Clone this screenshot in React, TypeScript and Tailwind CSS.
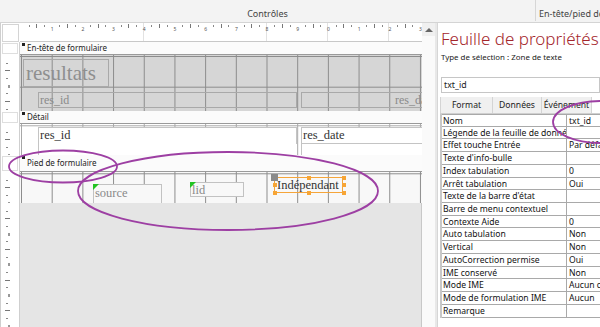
import React from 'react';

const STEP = 7.675;

const props: [string, string][] = [
  ['Nom', 'txt_id'],
  ['Légende de la feuille de donnée', ''],
  ['Effet touche Entrée', 'Par défaut'],
  ["Texte d'info-bulle", ''],
  ['Index tabulation', '0'],
  ['Arrêt tabulation', 'Oui'],
  ["Texte de la barre d'état", ''],
  ['Barre de menu contextuel', ''],
  ['Contexte Aide', '0'],
  ['Auto tabulation', 'Non'],
  ['Vertical', 'Non'],
  ['AutoCorrection permise', 'Oui'],
  ['IME conservé', 'Non'],
  ['Mode IME', 'Aucun contrôle'],
  ['Mode de formulation IME', 'Aucun'],
  ['Remarque', ''],
];

function HRuler() {
  const marks = [];
  for (let i = 1; 1 + i * STEP < 402; i++) {
    const x = 1 + i * STEP;
    if (i % 4 === 0) {
      marks.push(
        <span key={i} className="absolute top-[4px] text-[5px] leading-none text-[#555]" style={{ left: x - 1 }}>
          {(i / 4) % 10}
        </span>
      );
    } else {
      marks.push(
        <span
          key={i}
          className={i % 4 === 2 ? 'absolute top-[1px] w-px h-[4px] bg-[#777]' : 'absolute top-[2px] w-px h-[2px] bg-[#888]'}
          style={{ left: x }}
        />
      );
    }
  }
  return (
    <div className="relative w-[402px] h-full bg-white border-b border-[#c8c8c8] overflow-hidden">
      {[143, 266, 327, 388].map((x) => (
        <span key={x} className="absolute top-0 bottom-0 w-px bg-[#e2e2e2]" style={{ left: x - 20 }} />
      ))}
      {marks}
    </div>
  );
}

function VRuler({ h }: { h: number }) {
  const marks = [];
  for (let i = 1; i * STEP < h; i++) {
    const y = i * STEP;
    if (i % 4 === 0) {
      marks.push(<span key={i} className="absolute left-[7px] w-[2px] h-[3px] bg-[#999]" style={{ top: y - 1 }} />);
    } else if (i % 4 === 2) {
      marks.push(<span key={i} className="absolute left-[4px] w-[5px] h-px bg-[#777]" style={{ top: y }} />);
    } else {
      marks.push(<span key={i} className="absolute left-[5px] w-[2px] h-px bg-[#888]" style={{ top: y }} />);
    }
  }
  return (
    <div className="relative w-[20px] h-full border-l border-r border-[#cfcfcf] bg-white overflow-hidden">{marks}</div>
  );
}

function Bar({ label, h }: { label: string; h: string }) {
  return (
    <div className={`flex ${h}`}>
      <div className="w-[20px] h-full border-l border-r border-[#cfcfcf] bg-white p-px">
        <div className="h-full border border-[#dedede]" />
      </div>
      <div className="relative w-[402px] h-full bg-[#fbfbfb] border-b border-[#9a9a9a] flex items-center">
        <span className="absolute left-[2px] top-[1px] w-[3px] h-[3px] bg-[#222]" />
        <span className="pl-[7px] text-[8px] leading-none text-[#222]">{label}</span>
      </div>
    </div>
  );
}

const darkGrid =
  '[background-image:linear-gradient(to_right,#8c8c8c_1px,transparent_1px),linear-gradient(to_bottom,#8c8c8c_1px,transparent_1px)] [background-size:30.7px_30.7px] [background-position:1px_1px]';
const lightGrid =
  '[background-image:linear-gradient(to_right,#a8a8a8_1px,transparent_1px),linear-gradient(to_bottom,#a8a8a8_1px,transparent_1px)] [background-size:30.7px_30.7px] [background-position:1px_1px]';

const serif = "font-['Liberation_Serif',serif]";

function DesignView() {
  return (
    <div className="w-[422px] flex flex-col">
      <div className="flex h-[19px]">
        <div className="w-[20px] h-full border-l border-[#cfcfcf] bg-white p-[1px] pb-0">
          <div className="h-full border border-[#d4d4d4]" />
        </div>
        <HRuler />
      </div>

      <Bar label="En-tête de formulaire" h="h-[13px]" />
      <div className="flex h-[56px]">
        <VRuler h={56} />
        <div className={`relative w-[402px] h-full overflow-hidden bg-[#d6d6d6] ${darkGrid}`}>
          <div className={`absolute left-[3px] top-[4px] w-[86px] h-[28px] border border-[#a9a9a9] ${serif} text-[21px] leading-none text-[#8f8f8f] pl-[2px] pt-[3px]`}>
            resultats
          </div>
          <div className={`absolute left-[18px] top-[37px] w-[259px] h-[16px] border border-[#a9a9a9] ${serif} text-[12px] leading-[14px] text-[#8a8a8a] pl-[1px]`}>
            res_id
          </div>
          <div className={`absolute left-[281px] top-[37px] w-[125px] h-[16px] border border-[#a9a9a9] ${serif} text-[12px] leading-[14px] text-[#8a8a8a] pl-[93px] whitespace-nowrap`}>
            res_date
          </div>
        </div>
      </div>

      <Bar label="Détail" h="h-[13px]" />
      <div className="flex h-[31px]">
        <VRuler h={31} />
        <div className={`relative w-[402px] h-full overflow-hidden bg-white ${lightGrid}`}>
          <div className={`absolute left-[18px] top-[3px] w-[259px] h-[18px] border border-[#c4c4c4] bg-white ${serif} text-[12.5px] leading-[15px] text-[#333] pl-[1px]`}>
            res_id
          </div>
          <div className="absolute left-[18px] top-[20px] w-[259px] h-[14px] border-l border-[#c4c4c4] bg-white" />
          <div className={`absolute left-[281px] top-[3px] w-[125px] h-[17px] border border-[#c4c4c4] bg-white ${serif} text-[12.5px] leading-[15px] text-[#333] pl-[1px]`}>
            res_date
          </div>
          <div className="absolute left-[281px] top-[19px] w-[125px] h-[14px] border border-[#c4c4c4] bg-white" />
        </div>
      </div>

      <Bar label="Pied de formulaire" h="h-[17px]" />
      <div className="flex h-[31px]">
        <VRuler h={31} />
        <div className={`relative w-[402px] h-full overflow-hidden bg-[#f8f8f8] ${darkGrid}`}>
          <div className={`absolute left-[73px] top-[12px] w-[69px] h-[21px] border border-[#c2c2c2] bg-[#f8f8f8] ${serif} text-[12.5px] leading-[15px] text-[#8a8a8a] pl-[1px] pt-[1px]`}>
            source
          </div>
          <span className="absolute left-[73px] top-[12px] w-0 h-0 border-t-[6px] border-r-[6px] border-t-[#22c322] border-r-transparent" />
          <div className={`absolute left-[170px] top-[10px] w-[54px] h-[15px] border border-[#c2c2c2] bg-[#f8f8f8] ${serif} text-[12.5px] leading-[14px] text-[#8a8a8a] pl-[1px]`}>
            lid
          </div>
          <span className="absolute left-[170px] top-[10px] w-0 h-0 border-t-[6px] border-r-[6px] border-t-[#22c322] border-r-transparent" />
          <div className={`absolute left-[254px] top-[5px] w-[69px] h-[16px] border border-[#f5a53a] ${serif} text-[12.5px] leading-[14px] text-[#333] pl-[2px] whitespace-nowrap`}>
            Indépendant
          </div>
          {[
            [254, 5], [288, 5], [323, 5],
            [254, 12], [323, 12],
            [254, 20], [288, 20], [323, 20],
          ].map(([x, y]) => (
            <span key={`${x}-${y}`} className="absolute w-[4px] h-[4px] bg-[#f7a535]" style={{ left: x - 1, top: y - 1 }} />
          ))}
          <span className="absolute left-[251px] top-[2px] w-[7px] h-[7px] bg-[#8a8a8a]" />
        </div>
      </div>

      <div className="flex flex-1 min-h-0">
        <VRuler h={124} />
        <div className="w-[402px] h-full bg-[#e5e5e5] border-r border-[#c8c8c8]" />
      </div>
    </div>
  );
}

function Scrollbar() {
  return (
    <div className="w-[13px] flex flex-col bg-white">
      <div className="h-[13px] flex items-center justify-center bg-[#f0f0f0]">
        <span className="w-0 h-0 border-l-[4px] border-r-[4px] border-b-[4px] border-l-transparent border-r-transparent border-b-[#666]" />
      </div>
      <div className="flex-1 bg-[#fafafa]" />
    </div>
  );
}

function PropertySheet() {
  return (
    <div className="w-[163px] h-full border-l border-[#d6d6d6] bg-white overflow-hidden">
      <div className="h-[28px] pl-[3px] pt-[7px] text-[17px] leading-none font-light text-[#a4262c] whitespace-nowrap">
        Feuille de propriétés
      </div>
      <div className="h-[12px] pl-[3px] text-[7.9px] leading-[12px] text-[#222] whitespace-nowrap">
        Type de sélection : Zone de texte
      </div>
      <div className="mt-[14px] ml-[3px] h-[16px] border border-[#c6c6c6] pl-[2px] text-[8.8px] leading-[14px] text-[#222]">
        txt_id
      </div>
      <div className="mt-[4px] ml-[2px] h-[17px] flex border-b border-[#cfcfcf] text-[8.6px] text-[#222] whitespace-nowrap">
        <div className="w-[53px] flex items-center justify-center bg-[#f0f0f0] border-l border-r border-[#d4d4d4]">Format</div>
        <div className="w-[49px] flex items-center justify-center bg-[#f0f0f0] border-r border-[#d4d4d4]">Données</div>
        <div className="w-[50px] flex items-center justify-center bg-[#f0f0f0] border-r border-[#d4d4d4]">Événement</div>
        <div className="flex-1 bg-white" />
      </div>
      <div className="ml-[2px] border-l-2 border-[#c8c8c8]">
        {props.map(([label, value], i) => (
          <div key={label} className={`flex h-[12.73px] border-b border-[#a9a9a9] text-[8.6px] leading-[12px] text-[#111] ${i === 0 ? 'border-t' : ''}`}>
            <div className="w-[125px] shrink-0 border-r border-[#a9a9a9] pl-[1px] overflow-hidden whitespace-nowrap">{label}</div>
            <div className="flex-1 pl-[2px] overflow-hidden whitespace-nowrap">{value}</div>
          </div>
        ))}
      </div>
    </div>
  );
}

export default function App() {
  return (
    <div className="relative w-[600px] h-[327px] overflow-hidden bg-white font-['Noto_Sans',sans-serif]">
      <div className="flex h-[23px] bg-[#f3f3f3] border-b border-[#d4d4d4]">
        <div className="w-[535px] flex items-end justify-center pb-[2px] text-[9px] text-[#444]">Contrôles</div>
        <div className="w-px h-[21px] bg-[#d6d6d6]" />
        <div className="flex-1 flex items-end pl-[3px] pb-[2px] text-[9px] text-[#444] whitespace-nowrap overflow-hidden">
          En-tête/pied de page
        </div>
      </div>
      <div className="flex h-[304px]">
        <DesignView />
        <Scrollbar />
        <div className="w-[2px] bg-[#e8e8e8]" />
        <PropertySheet />
      </div>
      <svg className="absolute left-0 top-0 pointer-events-none" width="600" height="327">
        <ellipse cx="63" cy="166.5" rx="54" ry="16" fill="none" stroke="#9d3fa3" strokeWidth="1.8" />
        <ellipse cx="228" cy="191" rx="150" ry="39" fill="none" stroke="#9d3fa3" strokeWidth="1.8" />
        <ellipse cx="601" cy="122" rx="48" ry="21" fill="none" stroke="#9d3fa3" strokeWidth="1.8" />
      </svg>
    </div>
  );
}
